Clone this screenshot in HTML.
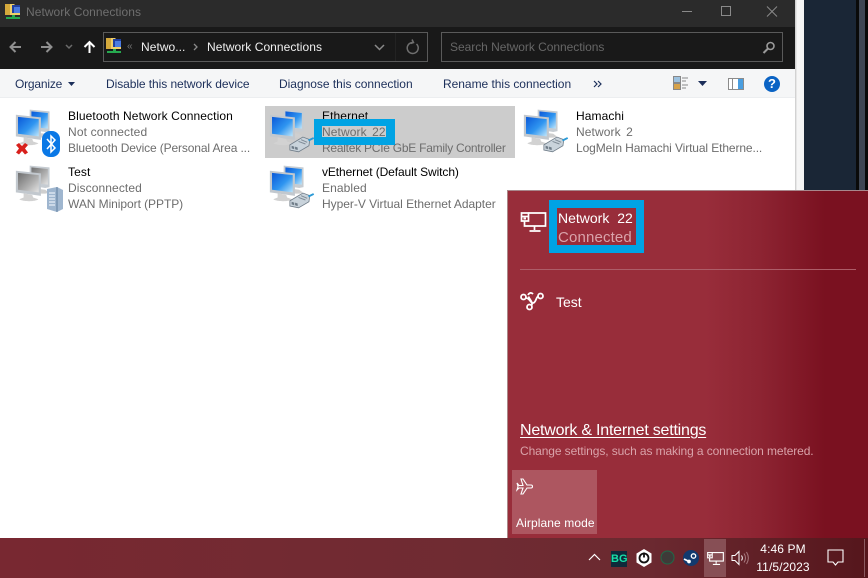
<!DOCTYPE html>
<html><head><meta charset="utf-8"><title>Network Connections</title>
<style>
html,body{margin:0;padding:0;width:868px;height:578px;overflow:hidden;background:#1a2636}
body{position:relative;font-family:"Liberation Sans",sans-serif;font-size:12px}
.a{position:absolute;white-space:nowrap}
.t{position:absolute;white-space:nowrap;line-height:16px;height:16px;letter-spacing:.1px}
.n{color:#000}.g{color:#6d6d6d}
.tb{color:#1c2f5a;top:76px}
svg{position:absolute;overflow:visible}
</style></head><body>
<svg width="0" height="0" style="position:absolute">
<defs>
<linearGradient id="scr" x1="0" y1="0" x2="1" y2="1"><stop offset="0" stop-color="#0a58d8"/><stop offset=".55" stop-color="#2f95f0"/><stop offset="1" stop-color="#bfe6fb"/></linearGradient>
<linearGradient id="scrg" x1="0" y1="0" x2="1" y2="1"><stop offset="0" stop-color="#6e6e6e"/><stop offset=".6" stop-color="#b0b0b0"/><stop offset="1" stop-color="#e4e4e4"/></linearGradient>
<symbol id="mon" viewBox="0 0 44 44" overflow="visible">
<path d="M17 3l23 2 0 23-5 1-18-3z" fill="#c6ccd2"/><path d="M19 5l19 2 0 18-19-2z" fill="url(#scr)"/>
<path d="M27 30l8 1 4 3c-2 2-10 2-13 0z" fill="#cfcfcf"/>
<path d="M1 9l29 3 0 26-29-4z" fill="#c2c8ce"/><path d="M3.500 11.500l24 2.500 0 20-24-3z" fill="url(#scr)"/>
<path d="M10 35l10 2 1 3 6 2c-3 3-18 3-22 0l5-2z" fill="#d2d2d2"/>
</symbol>
<symbol id="mong" viewBox="0 0 44 44" overflow="visible">
<path d="M17 3l23 2 0 23-5 1-18-3z" fill="#c6ccd2"/><path d="M19 5l19 2 0 18-19-2z" fill="url(#scrg)"/>
<path d="M27 30l8 1 4 3c-2 2-10 2-13 0z" fill="#cfcfcf"/>
<path d="M1 9l29 3 0 26-29-4z" fill="#c2c8ce"/><path d="M3.500 11.500l24 2.500 0 20-24-3z" fill="url(#scrg)"/>
<path d="M10 35l10 2 1 3 6 2c-3 3-18 3-22 0l5-2z" fill="#d2d2d2"/>
</symbol>
<symbol id="plug" viewBox="0 0 30 20" overflow="visible">
<path d="M1 11l15-9 8 3-1 7-12 7-10-2z" fill="#c9d3db" stroke="#6f7c88" stroke-width=".9"/>
<path d="M3 12l3 1v3l-3-1zM7 13l3 1v3l-3-1z" fill="#6f7c88"/>
<path d="M11 7l8 3M14 5l7 3" stroke="#7f8b96" stroke-width="1.100" fill="none"/>
<path d="M22 5l6-3 1 2-6 3z" fill="#2a9ad6"/>
</symbol>
<symbol id="netw" viewBox="0 0 26 22" overflow="visible">
<g fill="none" stroke="#fff" stroke-width="1.700">
<path d="M8 2h17v13H4V10"/><path d="M14 15v4M9 20h11"/><path d="M1 2h7v8H1z"/><path d="M1 5.500h7"/>
</g><rect x="3" y="6.500" width="2.500" height="2" fill="#fff"/>
</symbol>
<symbol id="winic" viewBox="0 0 16 18" overflow="visible">
<path d="M0 1h9l2 2h4v9H0z" fill="#f0cf6a"/><path d="M0 1h5v11H0z" fill="#d4a93c"/>
<rect x="7" y="2" width="8" height="8" fill="#203f9e"/><rect x="9" y="4" width="6" height="6" fill="#4b7be0"/>
<rect x="7" y="12" width="3" height="3" fill="#26a94f"/><rect x="1" y="14" width="14" height="2" fill="#26a94f"/>
</symbol>
</defs></svg>

<!-- desktop right -->
<div class="a" style="left:795px;top:0;width:9px;height:190px;background:linear-gradient(90deg,#c8c8c8,#f6f6f6 25%,#f4f4f4)"></div>
<div class="a" style="left:804px;top:0;width:52px;height:190px;background:#1a2636"></div>
<div class="a" style="left:856px;top:0;width:3px;height:190px;background:#0a0a0a"></div>
<div class="a" style="left:859px;top:0;width:6px;height:190px;background:#3e4654"></div>
<div class="a" style="left:865px;top:0;width:3px;height:190px;background:#0a0a0a"></div>

<!-- window -->
<div class="a" style="left:0;top:0;width:795px;height:27px;background:#2b2b2b"></div>
<svg style="left:5px;top:3px" width="16" height="18"><use href="#winic" width="16" height="18"/></svg>
<div class="t" style="left:26px;top:4px;color:#6f6f6f;letter-spacing:.05px">Network Connections</div>
<svg style="left:675px;top:0" width="120" height="27" fill="none" stroke="#8a8a8a" stroke-width="1">
<path d="M7 11.500h10"/><rect x="46.500" y="6.500" width="9" height="9"/><path d="M92 6.500l10 10M102 6.500l-10 10"/>
</svg>

<div class="a" style="left:0;top:27px;width:795px;height:42px;background:#191919"></div>
<svg style="left:0;top:27px" width="110" height="42" fill="none" stroke-width="2">
<path d="M21 20H11M15.500 15l-5 5 5 5" stroke="#8f8f8f"/>
<path d="M41 20h10M46.500 15l5 5-5 5" stroke="#8f8f8f"/>
<path d="M66 18l3 3 3-3" stroke="#6b6b6b" stroke-width="1.500"/>
<path d="M89.500 26V15M84.500 20l5-5 5 5" stroke="#fff"/>
</svg>
<div class="a" style="left:103px;top:32px;width:323px;height:28px;border:1px solid #5a5a5a"></div>
<svg style="left:106px;top:37px" width="16" height="18"><use href="#winic" width="16" height="18"/></svg>
<div class="t" style="left:127px;top:39px;color:#777;font-size:10px">«</div>
<div class="t" style="left:141px;top:39px;color:#f0f0f0;letter-spacing:.05px">Netwo...</div>
<svg style="left:192px;top:42px" width="8" height="10" fill="none" stroke="#8a8a8a" stroke-width="1.300"><path d="M2 2l3 3-3 3"/></svg>
<div class="t" style="left:207px;top:39px;color:#f0f0f0;letter-spacing:.05px">Network Connections</div>
<svg style="left:370px;top:36px" width="55" height="24" fill="none" stroke="#8a8a8a" stroke-width="1.500">
<path d="M5 9l4.500 4.500L14 9"/><path d="M25.500 -3v28" stroke="#232323" stroke-width="1"/>
<path d="M46.500 8a5.500 5.500 0 1 1-3.500-1.500M42 3.500l1.500 3-3 1" stroke="#6f6f6f"/>
</svg>
<div class="a" style="left:441px;top:32px;width:340px;height:28px;border:1px solid #5a5a5a"></div>
<div class="t" style="left:450px;top:39px;color:#666;letter-spacing:-.04px">Search Network Connections</div>
<svg style="left:762px;top:41px" width="14" height="14" fill="none" stroke="#9a9a9a" stroke-width="1.600"><circle cx="8.500" cy="5" r="3.500"/><path d="M6 7.500l-4.500 4.500" stroke-width="2"/></svg>

<div class="a" style="left:0;top:69px;width:795px;height:29px;background:#f5f6f7;border-bottom:1px solid #eceef0;box-sizing:border-box"></div>
<div class="t tb" style="left:15px;letter-spacing:-.2px">Organize</div>
<svg style="left:67px;top:81px" width="10" height="6"><path d="M1 1h7L4.500 5z" fill="#1c2f5a"/></svg>
<div class="t tb" style="left:106px;letter-spacing:-.07px">Disable this network device</div>
<div class="t tb" style="left:279px;letter-spacing:-.02px">Diagnose this connection</div>
<div class="t tb" style="left:443px;letter-spacing:-.03px">Rename this connection</div>
<svg style="left:593px;top:80px" width="10" height="8" fill="none" stroke="#1c2f5a" stroke-width="1.200"><path d="M1 1l3 3-3 3M5 1l3 3-3 3"/></svg>
<svg style="left:673px;top:76px" width="16" height="15"><rect x=".5" y=".5" width="7" height="6" fill="#9cc2e0" stroke="#888"/><rect x=".5" y="7.500" width="7" height="6" fill="#d6a24a" stroke="#888"/><path d="M9 2h6M9 5h4M9 9h6M9 12h4" stroke="#888" stroke-width="1"/></svg>
<svg style="left:698px;top:81px" width="10" height="6"><path d="M0 0h9L4.500 5z" fill="#1c2f5a"/></svg>
<svg style="left:728px;top:78px" width="17" height="13"><rect x=".5" y=".5" width="15" height="11" fill="#fff" stroke="#8b8b8b"/><rect x="10" y="1" width="5" height="10" fill="#4a9ee0"/><rect x="4" y="1" width="1" height="10" fill="#8b8b8b"/></svg>
<div class="a" style="left:764px;top:76px;width:16px;height:16px;border-radius:50%;background:#0a63c4;color:#fff;font-weight:bold;font-size:13px;line-height:16px;text-align:center">?</div>

<div class="a" style="left:0;top:98px;width:795px;height:440px;background:#fff"></div>

<!-- selected row -->
<div class="a" style="left:265px;top:106px;width:250px;height:52px;background:#cccccc"></div>

<!-- Bluetooth -->
<svg style="left:15px;top:107px" width="38" height="38"><use href="#mon" width="38" height="38"/></svg>
<svg style="left:15px;top:142px" width="14" height="14"><path d="M1 3l3-2 3 3 3-3 3 2-3 3.500 3 4-3 2-3-3.500-3 3.500-3-2 3-4z" fill="#d8201c"/></svg>
<svg style="left:42px;top:131px" width="18" height="26"><rect x="0" y="0" width="18" height="26" rx="8" fill="#0a78e6"/><path d="M5 8l8 9-4 4V5l4 4-8 9" fill="none" stroke="#fff" stroke-width="1.500"/></svg>
<div class="t n" style="left:68px;top:108px">Bluetooth Network Connection</div>
<div class="t g" style="left:68px;top:124px;letter-spacing:.15px">Not connected</div>
<div class="t g" style="left:68px;top:140px;letter-spacing:-.135px">Bluetooth Device (Personal Area ...</div>

<!-- Test -->
<svg style="left:15px;top:163px" width="38" height="38"><use href="#mong" width="38" height="38"/></svg>
<svg style="left:47px;top:187px" width="16" height="25"><path d="M0 2l10-2 6 3v19l-6 3-10-3z" fill="#9fb6cf"/><path d="M10 0v25" stroke="#5f7f9f" stroke-width="1"/><path d="M2 6h6M2 9h6M2 12h6M2 15h6M2 18h6" stroke="#e6eef6" stroke-width="1.300"/></svg>
<div class="t n" style="left:68px;top:164px">Test</div>
<div class="t g" style="left:68px;top:180px">Disconnected</div>
<div class="t g" style="left:68px;top:196px;letter-spacing:-.06px">WAN Miniport (PPTP)</div>

<!-- Ethernet -->
<svg style="left:269px;top:107px" width="38" height="38"><use href="#mon" width="38" height="38"/></svg>
<svg style="left:289px;top:135px" width="26" height="18"><use href="#plug" width="26" height="18"/></svg>
<div class="t n" style="left:322px;top:108px">Ethernet</div>
<div class="t g" style="left:322px;top:124px;word-spacing:2px">Network 22</div>
<div class="t g" style="left:322px;top:140px;letter-spacing:-.25px">Realtek PCIe GbE Family Controller</div>
<div class="a" style="left:314px;top:119px;width:81px;height:26px;box-sizing:border-box;border:solid #00a3e4;border-width:7px 9px 8px 8px"></div>

<!-- vEthernet -->
<svg style="left:269px;top:163px" width="38" height="38"><use href="#mon" width="38" height="38"/></svg>
<svg style="left:289px;top:191px" width="26" height="18"><use href="#plug" width="26" height="18"/></svg>
<div class="t n" style="left:322px;top:164px;letter-spacing:-.1px">vEthernet (Default Switch)</div>
<div class="t g" style="left:322px;top:180px">Enabled</div>
<div class="t g" style="left:322px;top:196px;letter-spacing:-.025px">Hyper-V Virtual Ethernet Adapter</div>

<!-- Hamachi -->
<svg style="left:523px;top:107px" width="38" height="38"><use href="#mon" width="38" height="38"/></svg>
<svg style="left:543px;top:135px" width="26" height="18"><use href="#plug" width="26" height="18"/></svg>
<div class="t n" style="left:576px;top:108px">Hamachi</div>
<div class="t g" style="left:576px;top:124px;word-spacing:2px">Network 2</div>
<div class="t g" style="left:576px;top:140px;letter-spacing:-.11px">LogMeIn Hamachi Virtual Etherne...</div>

<!-- flyout -->
<div class="a" style="left:507px;top:190px;width:361px;height:348px;background:linear-gradient(90deg,#982d3a 0%,#982d3a 55%,#8d2432 70%,#7a1120 88%,#7a1120 100%);border-left:1px solid #a88;box-sizing:border-box;border-top:1px solid #a8878c"></div>
<svg style="left:520px;top:211px" width="27" height="22"><use href="#netw" width="27" height="22"/></svg>
<div class="a" style="left:549px;top:200px;width:95px;height:53px;box-sizing:border-box;border:8px solid #00a3e4"></div>
<div class="t" style="left:558px;top:210px;font-size:14px;color:#fff;word-spacing:4px;letter-spacing:0">Network 22</div>
<div class="t" style="left:558px;top:230px;font-size:15px;color:#d9a3aa;letter-spacing:.15px">Connected</div>
<div class="a" style="left:520px;top:269px;width:336px;height:1px;background:#ad5d68"></div>
<svg style="left:520px;top:291px" width="25" height="20" fill="none" stroke="#fff" stroke-width="1.800"><circle cx="3.500" cy="6" r="2.500"/><circle cx="20.500" cy="5" r="2.500"/><circle cx="9.500" cy="16" r="2.500"/><path d="M6 7c4 0 4 5 7 5s3-6 5-6.500M11.500 14.500c2-3-2-6-3-9 M8 4c1-2 3-3 5-1"/></svg>
<div class="t" style="left:556px;top:294px;font-size:14px;color:#fff;letter-spacing:0">Test</div>
<div class="t" style="left:520px;top:423px;font-size:16px;color:#fff;text-decoration:underline;text-underline-offset:2px;letter-spacing:-.22px">Network &amp; Internet settings</div>
<div class="t" style="left:520px;top:443px;color:#d9a3aa;letter-spacing:-.1px">Change settings, such as making a connection metered.</div>
<div class="a" style="left:512px;top:470px;width:85px;height:64px;background:#ad5660"></div>
<svg style="left:516px;top:478px" width="17" height="17" fill="none" stroke="#fff" stroke-width="1.100"><path d="M1 5l2 2.500h4L5 1h2l4 6h4c2 0 2 3 0 3h-4l-4 6H5l2-6H3l-2 2 1-3.500z"/></svg>
<div class="t" style="left:516px;top:515px;color:#fff;letter-spacing:.1px">Airplane mode</div>

<!-- taskbar -->
<div class="a" style="left:0;top:538px;width:868px;height:40px;background:linear-gradient(90deg,#782831 0%,#6f2b32 55%,#6b2930 75%,#55161c 100%)"></div>
<svg style="left:588px;top:553px" width="13" height="9" fill="none" stroke="#fff" stroke-width="1.200"><path d="M1 7l5.500-5.500L12 7"/></svg>
<div class="a" style="left:611px;top:551px;width:16px;height:16px;background:#0e2a3a;color:#18e0a8;font-weight:bold;font-size:11px;line-height:16px;text-align:center">BG</div>
<svg style="left:636px;top:549px" width="16" height="18"><path d="M8 0l7.500 4.500v9L8 18 .5 13.500v-9z" fill="#fff"/><circle cx="8" cy="9" r="4.500" fill="none" stroke="#111" stroke-width="1.800"/><path d="M8 3.500v5" stroke="#111" stroke-width="1.800"/></svg>
<svg style="left:660px;top:550px" width="15" height="15"><circle cx="7.500" cy="7.500" r="6.500" fill="#3e3a38" stroke="#1f6a48" stroke-width="1"/></svg>
<div class="a" style="left:683px;top:550px;width:16px;height:16px;border-radius:50%;background:#123a6e"></div>
<svg style="left:683px;top:550px" width="16" height="16" fill="none" stroke="#fff" stroke-width="1.300"><circle cx="10.500" cy="6" r="2.200"/><path d="M1 9l5 2.500" stroke-width="1.800"/><circle cx="6" cy="11.500" r="1.200" fill="#fff"/></svg>
<div class="a" style="left:704px;top:539px;width:22px;height:38px;background:#874f55"></div>
<svg style="left:707px;top:551px" width="17" height="15"><use href="#netw" width="17" height="15"/></svg>
<svg style="left:731px;top:550px" width="18" height="16" fill="none" stroke="#fff" stroke-width="1"><path d="M1 5.500h3l4-4v13l-4-4H1z"/><path d="M10.500 5.500c1 1.500 1 3.500 0 5"/><path d="M13 3.500c2 3 2 6 0 9" stroke="#a87a80"/><path d="M15.500 2c2.500 4 2.500 8 0 12" stroke="#a87a80"/></svg>
<div class="t" style="left:750px;top:541px;width:66px;text-align:center;color:#fff">4:46 PM</div>
<div class="t" style="left:750px;top:559px;width:66px;text-align:center;color:#fff">11/5/2023</div>
<svg style="left:827px;top:549px" width="17" height="17" fill="none" stroke="#fff" stroke-width="1.100"><path d="M1 1h15v12h-5l-2.500 3L6 13H1z"/></svg>
<div class="a" style="left:864px;top:539px;width:1px;height:38px;background:#8a5a60"></div>
</body></html>
